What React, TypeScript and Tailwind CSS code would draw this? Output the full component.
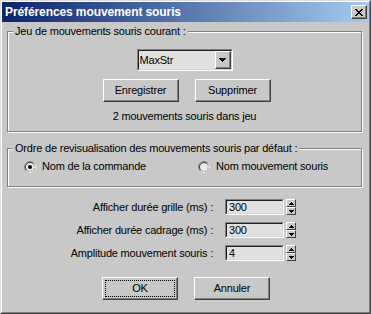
import React from 'react';

const CloseGlyph = () => {
  const rows = ['##....##', '.##..##.', '..####..', '...##...', '..####..', '.##..##.', '##....##'];
  return (
    <svg width="8" height="7" viewBox="0 0 8 7" shapeRendering="crispEdges">
      {rows.map((r, y) =>
        r.split('').map((c, x) => (c === '#' ? <rect key={`${x}-${y}`} x={x} y={y} width="1" height="1" fill="#000" /> : null))
      )}
    </svg>
  );
};

const Radio = ({ checked }: { checked?: boolean }) => (
  <svg width="12" height="12" viewBox="0 0 12 12" className="shrink-0">
    <circle cx="6" cy="6" r="4.5" fill="#ececec" />
    <circle cx="6" cy="6" r="5.5" fill="none" stroke="#808080" />
    <path d="M9.89 2.11 A5.5 5.5 0 0 1 2.11 9.89" fill="none" stroke="#fff" />
    <circle cx="6" cy="6" r="4.5" fill="none" stroke="#404040" />
    <path d="M9.18 2.82 A4.5 4.5 0 0 1 2.82 9.18" fill="none" stroke="#d4d4d4" />
    {checked && <circle cx="6" cy="6" r="2" fill="#000" />}
  </svg>
);

const Button = ({ children, focus }: { children: React.ReactNode; focus?: boolean }) => (
  <div className="w-[76px] h-[23px] flex bg-[#c8c8c8] border border-t-white border-l-white border-r-[#404040] border-b-[#404040] shadow-[inset_-1px_-1px_0_#808080] p-[2px]">
    <div
      className={`flex-1 flex items-center justify-center border ${
        focus ? 'border-dotted border-black' : 'border-transparent'
      }`}
    >
      {children}
    </div>
  </div>
);

const Sunken = ({ className, children }: { className: string; children: React.ReactNode }) => (
  <div className={`flex border border-t-[#808080] border-l-[#808080] border-r-white border-b-white ${className}`}>
    <div className="flex-1 flex items-center border border-t-[#202020] border-l-[#202020] border-r-[#d4d4d4] border-b-[#d4d4d4] bg-[#e0e0e0] overflow-hidden">
      {children}
    </div>
  </div>
);

const Group = ({ legend, className, children }: { legend: string; className: string; children: React.ReactNode }) => (
  <div
    className={`relative w-[355px] border border-[#808080] shadow-[inset_1px_1px_0_#fff,1px_1px_0_#fff] ${className}`}
  >
    <span className="absolute left-[5px] top-[-7px] px-[2px] bg-[#c8c8c8] leading-[13px] whitespace-nowrap">{legend}</span>
    {children}
  </div>
);

const SpinHalf = ({ up }: { up?: boolean }) => (
  <div className="flex-1 flex items-center justify-center bg-[#c8c8c8] border border-t-white border-l-white border-r-[#404040] border-b-[#404040]">
    <svg width="5" height="3" viewBox="0 0 5 3" shapeRendering="crispEdges">
      <path d={up ? 'M2.5 0 L5 3 L0 3 Z' : 'M0 0 L5 0 L2.5 3 Z'} fill="#000" />
    </svg>
  </div>
);

const SpinRow = ({ label, value }: { label: string; value: string }) => (
  <div className="flex items-center h-[16px]">
    <div className="w-[206px] text-right whitespace-nowrap leading-[13px]">{label}</div>
    <Sunken className="ml-[12px] w-[59px] h-[16px]">
      <span className="pl-[2px] leading-[13px]">{value}</span>
    </Sunken>
    <div className="ml-[2px] w-[10px] h-[16px] flex flex-col">
      <SpinHalf up />
      <SpinHalf />
    </div>
  </div>
);

export default function App() {
  return (
    <div className="w-[371px] h-[314px] font-['Liberation_Sans',Arial,sans-serif] text-[11px] tracking-[-0.2px] text-black bg-[#c8c8c8] border border-t-[#dcdcdc] border-l-[#dcdcdc] border-r-[#404040] border-b-[#404040]">
      <div className="h-full flex flex-col border border-t-white border-l-white border-r-[#808080] border-b-[#808080]">
        {/* title bar */}
        <div className="h-[20px] shrink-0 flex items-center justify-between pl-[3px] pr-[2px] bg-[linear-gradient(to_right,#0a246a,#a6caf0)]">
          <span className="text-white font-bold text-[12px] tracking-[-0.1px] leading-[14px]">Préférences mouvement souris</span>
          <div className="w-[16px] h-[14px] flex items-center justify-center bg-[#c8c8c8] border border-t-white border-l-white border-r-[#404040] border-b-[#404040] shadow-[inset_-1px_-1px_0_#808080]">
            <CloseGlyph />
          </div>
        </div>

        <div className="flex-1 flex flex-col pl-[5px]">
          <Group legend="Jeu de mouvements souris courant :" className="mt-[9px] h-[101px] flex flex-col items-center">
            <Sunken className="mt-[17px] w-[96px] h-[22px]">
              <span className="flex-1 pl-[1px] leading-[13px]">MaxStr</span>
              <div className="w-[16px] h-full flex items-center justify-center bg-[#c8c8c8] border border-t-white border-l-white border-r-[#404040] border-b-[#404040] shadow-[inset_-1px_-1px_0_#808080]">
                <svg width="7" height="4" viewBox="0 0 7 4" shapeRendering="crispEdges">
                  <path d="M0 0 H7 L3.5 4 Z" fill="#000" />
                </svg>
              </div>
            </Sunken>
            <div className="mt-[8px] flex gap-[16px] pl-[4px]">
              <Button>Enregistrer</Button>
              <Button>Supprimer</Button>
            </div>
            <div className="mt-[8px] leading-[13px]">2 mouvements souris dans jeu</div>
          </Group>

          <Group legend="Ordre de revisualisation des mouvements souris par défaut :" className="mt-[16px] h-[39px]">
            <div className="flex items-center h-[13px] mt-[11px] pl-[16px]">
              <div className="w-[174px] flex items-center gap-[6px]">
                <Radio checked />
                <span className="leading-[13px]">Nom de la commande</span>
              </div>
              <div className="flex items-center gap-[6px]">
                <Radio />
                <span className="leading-[13px]">Nom mouvement souris</span>
              </div>
            </div>
          </Group>

          <div className="mt-[12px] flex flex-col gap-[7px]">
            <SpinRow label="Afficher durée grille (ms) :" value="300" />
            <SpinRow label="Afficher durée cadrage (ms) :" value="300" />
            <SpinRow label="Amplitude mouvement souris :" value="4" />
          </div>

          <div className="mt-[16px] flex gap-[16px] pl-[95px]">
            <Button focus>OK</Button>
            <Button>Annuler</Button>
          </div>
        </div>
      </div>
    </div>
  );
}
